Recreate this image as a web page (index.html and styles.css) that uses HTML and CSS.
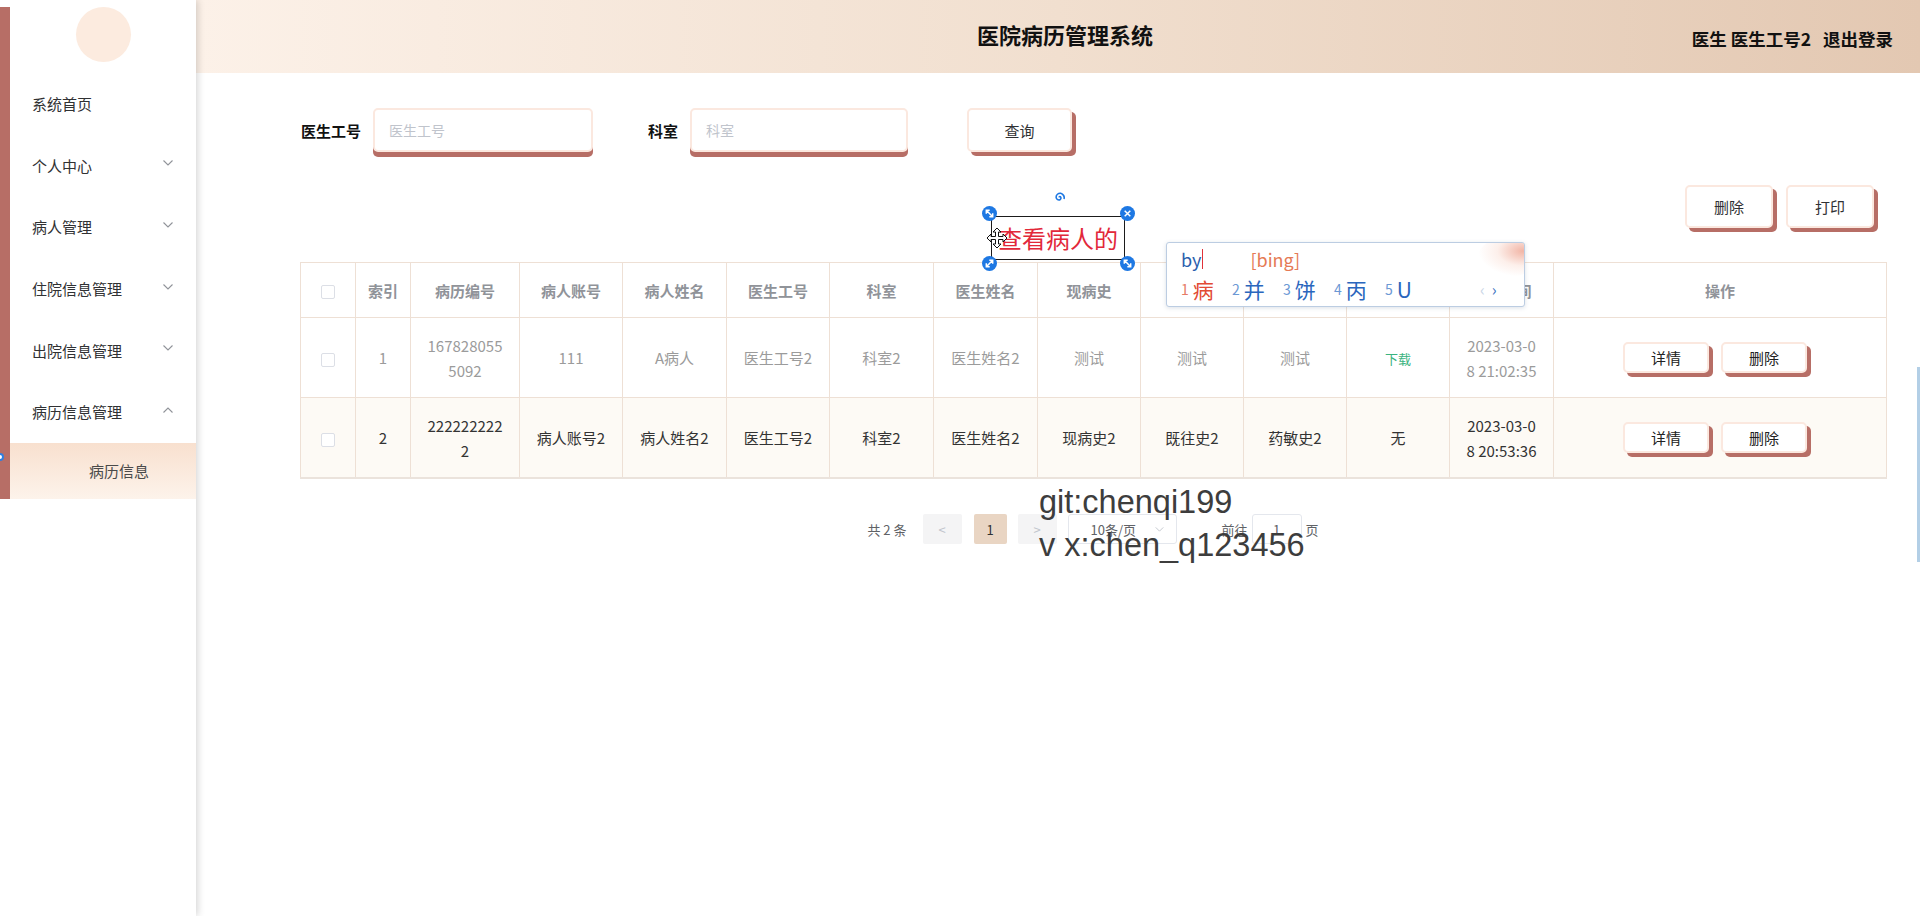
FILE: index.html
```html
<!DOCTYPE html>
<html lang="zh">
<head>
<meta charset="utf-8">
<title>医院病历管理系统</title>
<link rel="stylesheet" href="styles.css">
</head>
<body>
<div class="app">
  <aside class="sidebar">
    <div class="side-top">
      <div class="avatar"></div>
      <nav class="menu">
        <div class="menu-item">系统首页</div>
        <div class="menu-item">个人中心<svg class="chev" viewBox="0 0 10 6"><polyline points="0.5,0.5 5,5 9.5,0.5"/></svg></div>
        <div class="menu-item">病人管理<svg class="chev" viewBox="0 0 10 6"><polyline points="0.5,0.5 5,5 9.5,0.5"/></svg></div>
        <div class="menu-item">住院信息管理<svg class="chev" viewBox="0 0 10 6"><polyline points="0.5,0.5 5,5 9.5,0.5"/></svg></div>
        <div class="menu-item">出院信息管理<svg class="chev" viewBox="0 0 10 6"><polyline points="0.5,0.5 5,5 9.5,0.5"/></svg></div>
        <div class="menu-item">病历信息管理<svg class="chev" viewBox="0 0 10 6"><polyline points="0.5,5.5 5,1 9.5,5.5"/></svg></div>
        <div class="sub-item">病历信息</div>
      </nav>
    </div>
  </aside>
  <main class="main">
    <header class="topbar">
      <div></div>
      <div class="title">医院病历管理系统</div>
      <div class="user"><span>医生 医生工号2</span><span>退出登录</span></div>
    </header>
    <section class="content">
      <div class="search">
        <label class="lbl">医生工号</label>
        <input class="inp" placeholder="医生工号">
        <label class="lbl lbl2">科室</label>
        <input class="inp inp2" placeholder="科室">
        <button class="btn btn-search">查询</button>
      </div>
      <div class="actions">
        <button class="btn btn-lg">删除</button>
        <button class="btn btn-lg">打印</button>
      </div>
      <table class="grid">
        <colgroup>
          <col class="w55"><col class="w55"><col class="w109"><col class="w103"><col class="w104"><col class="w103"><col class="w104"><col class="w104"><col class="w103"><col class="w103"><col class="w103"><col class="w103"><col class="w104"><col class="w333">
        </colgroup>
        <thead>
          <tr>
            <th><span class="cb"></span></th>
            <th>索引</th><th>病历编号</th><th>病人账号</th><th>病人姓名</th><th>医生工号</th><th>科室</th><th>医生姓名</th><th>现病史</th><th>既往史</th><th>药敏史</th><th>病历文件</th><th>登记时间</th><th>操作</th>
          </tr>
        </thead>
        <tbody>
          <tr class="r1">
            <td><span class="cb"></span></td>
            <td>1</td>
            <td><div class="wrap">1678280555092</div></td>
            <td>111</td><td>A病人</td><td>医生工号2</td><td>科室2</td><td>医生姓名2</td><td>测试</td><td>测试</td><td>测试</td>
            <td><span class="dl">下载</span></td>
            <td><div class="wrap wrap-date">2023-03-08 21:02:35</div></td>
            <td><div class="ops"><button class="btn btn-sm">详情</button><button class="btn btn-sm">删除</button></div></td>
          </tr>
          <tr class="r2">
            <td><span class="cb"></span></td>
            <td>2</td>
            <td><div class="wrap">2222222222</div></td>
            <td>病人账号2</td><td>病人姓名2</td><td>医生工号2</td><td>科室2</td><td>医生姓名2</td><td>现病史2</td><td>既往史2</td><td>药敏史2</td>
            <td>无</td>
            <td><div class="wrap wrap-date">2023-03-08 20:53:36</div></td>
            <td><div class="ops"><button class="btn btn-sm">详情</button><button class="btn btn-sm">删除</button></div></td>
          </tr>
        </tbody>
      </table>
      <div class="pager">
        <span class="total">共 2 条</span>
        <span class="pbtn prev">&lt;</span>
        <span class="pnum">1</span>
        <span class="pbtn next">&gt;</span>
        <span class="sizes">10条/页<svg class="schev" viewBox="0 0 10 6"><polyline points="0.5,0.5 5,5 9.5,0.5"/></svg></span>
        <span class="goto">前往</span>
        <span class="jump">1</span>
        <span class="page">页</span>
      </div>
    </section>
  </main>
</div>

<span class="edge-dot"></span>
<span class="edge-bar"></span>

<div class="anno">
  <span class="anno-text">查看病人的</span>
  <svg class="rot" viewBox="0 0 12 12"><path d="M6 6.3 a0.9 0.9 0 0 1 1.3 -0.6 a1.9 1.9 0 0 1 -0.6 3.2 a2.9 2.9 0 0 1 -3.6 -2.6 a4 4 0 0 1 4.6 -4 a4.6 4.6 0 0 1 3.3 5.8"/></svg>
  <svg class="h h-tl" viewBox="0 0 16 16"><circle cx="8" cy="8" r="8"/><path d="M4.6 4.6 L11.4 11.4 M4.6 8.2 V4.6 H8.2 M11.4 7.8 V11.4 H7.8"/></svg>
  <svg class="h h-tr" viewBox="0 0 16 16"><circle cx="8" cy="8" r="8"/><path d="M5 5 L11 11 M11 5 L5 11"/></svg>
  <svg class="h h-bl" viewBox="0 0 16 16"><circle cx="8" cy="8" r="8"/><path d="M4.6 11.4 L11.4 4.6 M7.8 4.6 H11.4 V8.2 M4.6 7.8 V11.4 H8.2"/></svg>
  <svg class="h h-br" viewBox="0 0 16 16"><circle cx="8" cy="8" r="8"/><path d="M4.6 4.6 L11.4 11.4 M4.6 8.2 V4.6 H8.2 M11.4 7.8 V11.4 H7.8"/></svg>
  <svg class="move" viewBox="0 0 22 22"><path d="M11 1 L15 5 H12.5 V9.5 H17 V7 L21 11 L17 15 V12.5 H12.5 V17 H15 L11 21 L7 17 H9.5 V12.5 H5 V15 L1 11 L5 7 V9.5 H9.5 V5 H7 Z"/></svg>
</div>

<div class="ime">
  <span class="ime-deco"></span>
  <div class="ime-top"><span class="ime-in">by</span><span class="caret"></span><span class="ime-py">[bing]</span></div>
  <div class="ime-row">
    <span class="cand first"><i>1</i>病</span>
    <span class="cand"><i>2</i>并</span>
    <span class="cand"><i>3</i>饼</span>
    <span class="cand"><i>4</i>丙</span>
    <span class="cand"><i>5</i>U</span>
    <span class="ime-nav"><b class="off">‹</b><b>›</b></span>
  </div>
</div>

<div class="watermark">git:chenqi199<br>v x:chen_q123456</div>
</body>
</html>
```

FILE: styles.css
```css
html, body {
  margin: 0;
  padding: 0;
}
body {
  font-family: "Noto Sans CJK SC", "Microsoft YaHei", sans-serif;
  color: #303133;
  background: #fff;
  width: 1920px;
  height: 916px;
  overflow: hidden;
  position: relative;
}
.app {
  display: flex;
  height: 916px;
}

/* sidebar */
.sidebar {
  width: 196px;
  flex: none;
  height: 916px;
  background: #fff;
  box-shadow: 2px 0 7px rgba(0, 0, 0, 0.16);
  position: relative;
  z-index: 2;
}
.side-top {
  border-left: 10px solid #b76e66;
}
.avatar {
  width: 55px;
  height: 55px;
  border-radius: 50%;
  background: #fcebdf;
  margin: 7px auto 11px;
}
.menu-item {
  height: 61.6px;
  display: flex;
  align-items: center;
  justify-content: space-between;
  padding: 0 23px 0 22px;
  font-size: 15px;
  color: #303133;
}
.chev {
  width: 10px;
  height: 6px;
  margin-top: -4px;
  fill: none;
  stroke: #909399;
  stroke-width: 1.1;
}
.sub-item {
  height: 56px;
  display: flex;
  align-items: center;
  padding-left: 79px;
  font-size: 15px;
  color: #4a4a4a;
  background: linear-gradient(180deg, #f8e0cf, #fdf3eb);
}

/* main */
.main {
  flex: 1;
  min-width: 0;
  display: flex;
  flex-direction: column;
}
.topbar {
  height: 73px;
  flex: none;
  display: grid;
  grid-template-columns: 1fr auto 1fr;
  align-items: center;
  padding: 0 27px 0 41px;
  background: linear-gradient(90deg, #fcf1e8 0%, #f1dfcf 50%, #e3c8b2 100%);
}
.title {
  font-size: 22px;
  font-weight: 700;
  color: #111;
  margin-top: -5px;
}
.user {
  justify-self: end;
  display: flex;
  gap: 12px;
  font-size: 17.5px;
  font-weight: 700;
  color: #111;
  margin-top: 3px;
}

.content {
  padding: 35px 34px 0 104px;
}
.search {
  display: flex;
  align-items: center;
  height: 44px;
}
.lbl {
  font-size: 15px;
  font-weight: 700;
  color: #111;
  margin-right: 12px;
  margin-left: 1px;
}
.lbl2 {
  margin-left: 55px;
}
.inp {
  width: 220px;
  height: 44px;
  box-sizing: border-box;
  border: 2px solid #fbe8df;
  border-radius: 5px;
  box-shadow: 0 5px 0 #b76e66;
  padding: 0 14px;
  font-family: inherit;
  font-size: 14px;
  color: #303133;
  background: #fff;
  outline: none;
}
.inp2 {
  width: 218px;
}
.inp::placeholder {
  color: #c0c4cc;
}
.btn {
  background: #fff;
  border: 2px solid #fbe8df;
  border-radius: 5px;
  box-shadow: 4px 4px 0 #b76e66;
  font-family: inherit;
  font-size: 15px;
  color: #303133;
  padding: 0;
  cursor: pointer;
}
.btn-search {
  margin-left: 59px;
  width: 105px;
  height: 44px;
}
.actions {
  display: flex;
  justify-content: flex-end;
  gap: 13px;
  margin: 33px 12px 0 0;
}
.btn-lg {
  width: 88px;
  height: 43px;
}

/* table */
.grid {
  width: 1586px;
  margin-top: 34px;
  border-collapse: collapse;
  table-layout: fixed;
  font-size: 15px;
}
.w55 { width: 55px; }
.w103 { width: 103px; }
.w104 { width: 104px; }
.w109 { width: 109px; }
.w333 { width: 333px; }
.grid th,
.grid td {
  border: 1px solid #eee0d5;
  text-align: center;
  padding: 0;
  vertical-align: middle;
}
.grid th {
  height: 54px;
  font-weight: 700;
  color: #909399;
  background: #fff;
}
.grid td {
  height: 79px;
  line-height: 25px;
}
.grid tbody tr:last-child td {
  border-bottom: 2px solid #ebe3dc;
}
.r1 td {
  color: #9b9b9b;
  background: #fff;
}
.r2 td {
  color: #333;
  background: #fdfaf5;
}
.cb {
  display: inline-block;
  width: 14px;
  height: 14px;
  box-sizing: border-box;
  border: 1px solid #dcdfe6;
  border-radius: 2px;
  background: #fff;
  vertical-align: middle;
}
.wrap {
  width: 80px;
  margin: 0 auto;
  word-break: break-all;
}
.wrap-date {
  width: 72px;
}
.dl {
  color: #3ab37e;
  font-size: 13px;
}
.ops {
  display: flex;
  justify-content: center;
  gap: 12px;
  padding-right: 10px;
}
.btn-sm {
  width: 86px;
  height: 31px;
  color: #222;
}

/* pagination */
.pager {
  display: flex;
  align-items: center;
  justify-content: center;
  height: 30px;
  margin-top: 35px;
  font-size: 13px;
  color: #606266;
}
.total {
  margin-right: 16px;
}
.pbtn {
  width: 39px;
  height: 30px;
  display: flex;
  align-items: center;
  justify-content: center;
  background: #f4f4f5;
  color: #c0c4cc;
  border-radius: 2px;
  font-size: 13px;
}
.pnum {
  width: 33px;
  height: 30px;
  margin: 0 11px 0 12px;
  display: flex;
  align-items: center;
  justify-content: center;
  background: #e9d5c3;
  color: #303133;
  border-radius: 2px;
}
.sizes {
  margin-left: 11px;
  width: 109px;
  height: 30px;
  box-sizing: border-box;
  border: 1px solid #e4e7ed;
  border-radius: 3px;
  display: flex;
  align-items: center;
  justify-content: space-between;
  padding: 0 12px 0 22px;
  color: #606266;
}
.schev {
  width: 9px;
  height: 5px;
  fill: none;
  stroke: #c0c4cc;
  stroke-width: 1.1;
}
.goto {
  margin-left: 45px;
  margin-right: 4px;
}
.jump {
  width: 50px;
  height: 30px;
  box-sizing: border-box;
  border: 1px solid #e4e7ed;
  border-radius: 3px;
  display: flex;
  align-items: center;
  justify-content: center;
  color: #606266;
  margin-right: 4px;
}

/* screen overlays */
.edge-dot {
  position: absolute;
  left: -4px;
  top: 453px;
  width: 8px;
  height: 8px;
  border-radius: 50%;
  border: 2px solid #2f7fe0;
  box-sizing: border-box;
  background: #fff;
  z-index: 5;
}
.edge-bar {
  position: absolute;
  left: 1917px;
  top: 367px;
  width: 3px;
  height: 195px;
  background: #b3cfe6;
}

.anno {
  position: absolute;
  left: 991px;
  top: 216px;
  width: 134px;
  height: 44px;
  box-sizing: border-box;
  border: 1px solid #1b1b1b;
  z-index: 10;
}
.anno-text {
  position: absolute;
  left: 6px;
  top: 0;
  line-height: 42px;
  font-size: 24px;
  color: #e2283a;
  white-space: nowrap;
}
.rot {
  position: absolute;
  left: 61px;
  top: -26px;
  width: 12px;
  height: 12px;
  fill: none;
  stroke: #1e78e3;
  stroke-width: 1.6;
}
.h {
  position: absolute;
  width: 15px;
  height: 15px;
}
.h circle {
  fill: #1e78e3;
}
.h path {
  fill: none;
  stroke: #fff;
  stroke-width: 1.6;
}
.h-tl { left: -10px; top: -11px; }
.h-tr { left: 128px; top: -11px; }
.h-bl { left: -10px; top: 39px; }
.h-br { left: 128px; top: 39px; }
.move {
  position: absolute;
  left: -6px;
  top: 10px;
  width: 22px;
  height: 22px;
  fill: #fff;
  stroke: #111;
  stroke-width: 1;
}

.ime {
  position: absolute;
  left: 1166px;
  top: 242px;
  width: 359px;
  height: 65px;
  box-sizing: border-box;
  background: #fff;
  border: 1px solid #bccde2;
  border-radius: 3px;
  box-shadow: 0 1px 4px rgba(60, 90, 130, 0.18);
  z-index: 10;
  overflow: hidden;
  font-family: "Noto Sans CJK SC", sans-serif;
}
.ime-deco {
  position: absolute;
  right: -14px;
  top: -6px;
  width: 60px;
  height: 40px;
  border-radius: 50%;
  background: radial-gradient(ellipse at 75% 35%, rgba(236, 150, 128, 0.7), rgba(248, 210, 196, 0.35) 40%, rgba(255, 255, 255, 0) 70%);
}
.ime-top {
  position: absolute;
  left: 14px;
  top: 3px;
  height: 26px;
  display: flex;
  align-items: center;
  font-size: 18px;
}
.ime-in {
  color: #2b5fad;
}
.caret {
  width: 1px;
  height: 20px;
  background: #e0323a;
  margin-left: 1px;
}
.ime-py {
  color: #e57a55;
  margin-left: 47px;
}
.ime-row {
  position: absolute;
  left: 14px;
  top: 32px;
  height: 28px;
  display: flex;
  align-items: center;
  font-size: 21px;
  color: #2a66bd;
}
.cand {
  display: flex;
  align-items: center;
  width: 51px;
}
.cand i {
  font-style: normal;
  font-size: 14px;
  color: #6b98d4;
  margin-right: 4px;
}
.cand.first {
  color: #e24a35;
}
.cand.first i {
  color: #e67a66;
}
.ime-nav {
  margin-left: 44px;
  display: flex;
  gap: 7px;
  font-size: 16px;
}
.ime-nav b {
  font-weight: 400;
  color: #3f74c2;
}
.ime-nav b.off {
  color: #c9d5e6;
}

.watermark {
  position: absolute;
  left: 1039px;
  top: 481px;
  font-family: "Liberation Sans", Arial, sans-serif;
  font-size: 32.5px;
  line-height: 43px;
  color: #3d3d3d;
  z-index: 9;
  white-space: nowrap;
}
```
